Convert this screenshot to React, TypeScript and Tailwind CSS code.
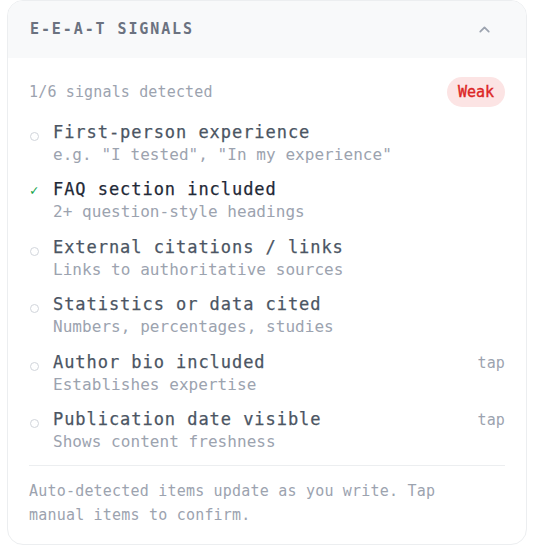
import { ChevronUp } from 'lucide-react';

const signals = [
  { label: 'First-person experience', desc: 'e.g. "I tested", "In my experience"', done: false, manual: false },
  { label: 'FAQ section included', desc: '2+ question-style headings', done: true, manual: false },
  { label: 'External citations / links', desc: 'Links to authoritative sources', done: false, manual: false },
  { label: 'Statistics or data cited', desc: 'Numbers, percentages, studies', done: false, manual: false },
  { label: 'Author bio included', desc: 'Establishes expertise', done: false, manual: true },
  { label: 'Publication date visible', desc: 'Shows content freshness', done: false, manual: true },
];

export default function App() {
  const found = signals.filter((s) => s.done).length;

  return (
    <div
      className="min-h-[554px] bg-white px-[7px]"
      style={{ fontFamily: '"DejaVu Sans Mono", "Liberation Mono", monospace' }}
    >
      <div className="overflow-hidden rounded-[16px] border border-[#eceef0] bg-white">
        {/* Header */}
        <div className="flex h-[57px] items-center justify-between bg-[#f8f9fa] pl-[22px] pr-[33px]">
          <h2 className="text-[15px] font-bold tracking-[1.9px] text-[#6b7280]">E-E-A-T SIGNALS</h2>
          <ChevronUp size={17} strokeWidth={2.5} className="text-[#9ca3af]" />
        </div>

        <div className="px-[21px] pb-[17px] pt-[19px]">
          {/* Summary */}
          <div className="flex h-[30px] items-center justify-between">
            <span className="text-[15px] tracking-[0.15px] text-[#9ca3af]">
              {found}/{signals.length} signals detected
            </span>
            <span className="rounded-full bg-[#fce4e4] px-[11px] py-[5px] text-[15px] leading-[20px] text-[#dc2626] [-webkit-text-stroke:0.4px]">
              Weak
            </span>
          </div>

          {/* Signal list */}
          <div className="mt-[13.5px] flex flex-col gap-[12.5px]">
            {signals.map((s) => (
              <div key={s.label} className="flex items-start">
                <div className="flex h-[23px] w-[24px] shrink-0 items-start pt-[11px] pl-[1px]">
                  {s.done ? (
                    <span className="-mt-[6px] text-[14px] leading-none text-[#16a34a]">✓</span>
                  ) : (
                    <span className="block h-[9px] w-[9px] rounded-full border border-[#d1d5db]" />
                  )}
                </div>
                <div className="flex-1">
                  <div
                    className={`text-[17px] leading-[23px] tracking-[0.95px] [-webkit-text-stroke:0.25px] ${
                      s.done ? 'text-[#1f2937]' : 'text-[#4b5563]'
                    }`}
                  >
                    {s.label}
                  </div>
                  <div className="text-[16px] leading-[22px] tracking-[0.05px] text-[#9ca3af]">{s.desc}</div>
                </div>
                {s.manual && (
                  <span className="pt-[1px] text-[15px] leading-[23px] tracking-[0.1px] text-[#9ca3af]">tap</span>
                )}
              </div>
            ))}
          </div>

          <div className="mt-[11.5px] h-px bg-[#eceef0]" />

          <p className="pt-[13px] pr-[50px] text-[15px] leading-[24px] tracking-[0.2px] text-[#9ca3af]">
            Auto-detected items update as you write. Tap manual items to confirm.
          </p>
        </div>
      </div>
    </div>
  );
}
